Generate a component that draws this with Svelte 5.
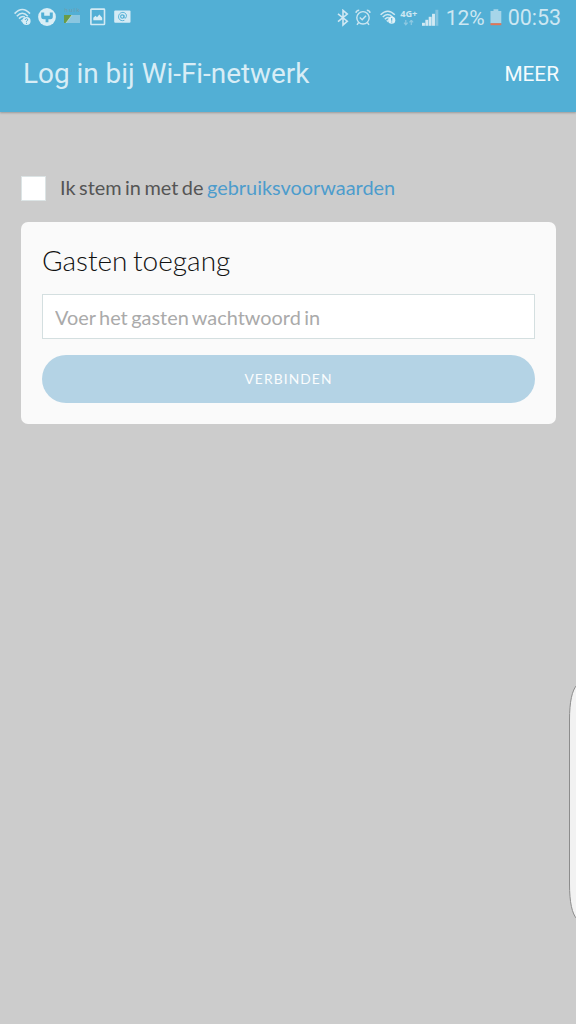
<script>
  let accepted = false;
  let password = "";
  let bars = [3, 6, 9, 12, 16];
</script>

<div class="screen">
  <header>
    <div class="status-bar">
      <div class="notifications">
        <svg width="18" height="18" viewBox="0 0 18 18">
          <g fill="none" stroke="#cfe8f2" stroke-width="1.6">
            <path d="M0.6 5.6Q8.3 -2.6 16 5.6" />
            <path d="M2.8 8.2Q8.3 2.4 13.8 8.2" />
            <path d="M5 10.6Q8 7.6 10.8 8.9" />
          </g>
          <path d="M6.7 12.7L8.6 11L9 14.8Z" fill="#cfe8f2" />
          <circle cx="12.5" cy="13" r="4.1" fill="#d9eef6" />
          <path d="M11.1 12Q11.3 10.6 12.6 10.7Q14.2 10.9 13.6 12.2L12.5 13.4V14.1M12.5 14.8V15.8" fill="none" stroke="#52afd5" />
        </svg>
        <svg width="18" height="18" viewBox="0 0 18 18">
          <circle cx="9" cy="9" r="8.9" fill="#d9eef6" />
          <path d="M3.2 4.6H6.2V7.8H11.8V4.6H14.8V9.2Q14.6 11 12.4 11.2H10.4V14.2H7.6V11.2H5.6Q3.4 11 3.2 9.2Z" fill="#52afd5" />
        </svg>
        <svg class="thumb" width="18" height="18" viewBox="0 0 18 18">
          <text x="0.5" y="4" textLength="15">hulk</text>
          <path d="M0 7H16V15H0Z" fill="#8ac6e0" />
          <path d="M0 7H8L2 15H0Z" fill="#699b48" />
          <path d="M8 7L2 15" stroke="#c5dfda" stroke-width="0.7" />
        </svg>
        <svg width="16" height="18" viewBox="0 0 16 18">
          <rect x="0.9" y="1.1" width="13.6" height="15.4" rx="0.6" fill="none" stroke="#d3eaf4" stroke-width="1.6" />
          <path d="M3.3 12.2V9.8L5.6 7.8L7 9.2L9.3 6.6L12.2 9.8V12.2Z" fill="#d9eef6" />
        </svg>
        <svg width="17" height="18" viewBox="0 0 17 18">
          <rect x="0.2" y="2.5" width="16.3" height="12.2" rx="1" fill="#d5ebf5" />
          <circle cx="8.3" cy="8.6" r="1.7" fill="none" stroke="#52afd5" stroke-width="1.1" />
          <path d="M10 7V9.2Q10.6 11 12 9.7C13.8 5.8 9.8 3.1 6.6 5C3.7 6.8 3.9 11.3 7 12.4Q8.6 13 10.4 12.3" fill="none" stroke="#52afd5" stroke-width="0.9" />
        </svg>
      </div>
      <div class="system">
        <svg width="12" height="18" viewBox="0 0 12 18">
          <path d="M1 4.8L10.3 12.2L6 16V1.4L10.3 5.1L1 12.6" fill="none" stroke="#d0e8f3" stroke-width="1.6" />
        </svg>
        <svg class="alarm" width="16" height="18" viewBox="0 0 16 18">
          <g fill="none" stroke="#cce6f1" stroke-width="1.4">
            <circle cx="8" cy="8.8" r="6.2" />
            <path d="M4.8 8.4L7.2 10.7L11 6.7" />
            <path d="M0.9 3.8Q1.4 1.4 4.2 1.2M11.8 1.2Q14.6 1.4 15.1 3.8M3.6 13.5L2 15.8M12.4 13.5L14 15.8" />
          </g>
        </svg>
        <svg class="wifi" width="17" height="18" viewBox="0 0 17 18">
          <g fill="none" stroke="#cfe8f2" stroke-width="1.5">
            <path d="M0.6 5.8Q7.7 -1.4 14.8 5.8" />
            <path d="M2.8 8.1Q7.7 2.8 12.6 8.1" />
            <path d="M4.8 10.2Q7 8 8.8 8.6" />
          </g>
          <path d="M6.2 11.8L7.7 10.6L8.2 13.6Z" fill="#cfe8f2" />
          <circle cx="11.7" cy="11.2" r="3.6" fill="#dff1f7" />
          <path d="M11.7 8.9V11.8M11.7 12.5V13.6" stroke="#52afd5" stroke-width="1.1" />
        </svg>
        <div class="mobile">
          <span>4G+</span>
          <svg width="12" height="6" viewBox="0 0 12 6">
            <path d="M2.8 0V4M1 2.6L2.8 4.8L4.6 2.6M8.3 5V1M6.5 2.4L8.3 0.2L10.1 2.4" fill="none" stroke="#8cc8e1" stroke-width="1.2" />
          </svg>
        </div>
        <svg class="signal" width="17" height="18" viewBox="0 0 17 18">
          {#each bars as height, i}
            <rect x={i * 3.35} y={16.8 - height} width="2.9" {height} fill={i < 4 ? "#d2e9f3" : "#82c3df"} />
          {/each}
        </svg>
        <span class="percent">12%</span>
        <svg class="battery" width="12" height="18" viewBox="0 0 12 18">
          <path d="M0.5 2H3.5V0.3H8.3V2H11.3V14.2H0.5Z" fill="#a6d5e9" />
          <path d="M0.5 14.2H11.3V16.2H0.5Z" fill="#e57555" />
        </svg>
        <span class="clock">00:53</span>
      </div>
    </div>
    <div class="title-bar">
      <h1>Log in bij Wi-Fi-netwerk</h1>
      <button class="more">MEER</button>
    </div>
  </header>

  <main>
    <div class="terms">
      <input id="terms" type="checkbox" bind:checked={accepted} />
      <label for="terms">Ik stem in met de <a href="#terms">gebruiksvoorwaarden</a></label>
    </div>
    <form class="card" on:submit|preventDefault>
      <h2>Gasten toegang</h2>
      <input class="password" type="password" placeholder="Voer het gasten wachtwoord in" bind:value={password} />
      <button class="connect" class:ready={accepted && password}>VERBINDEN</button>
    </form>
  </main>

  <!-- edge panel that slides in from the right -->
  <div class="edge-panel">
    <svg width="8" height="236" viewBox="0 0 8 236">
      <path d="M9 1C4 6 1.5 18 1.5 36V200C1.5 218 4 230 9 235Z" fill="#f2f2f2" stroke="#8c8c8c" />
    </svg>
  </div>
</div>

<style>
  :global(body) {
    margin: 0;
    background: #ccc;
  }

  .screen {
    position: relative;
    height: 1024px;
    background: #ccc;
    font-family: Lato, sans-serif;
    overflow: hidden;
  }

  header {
    height: 112px;
    background: #52afd5;
    box-shadow: 0 1px 2px rgba(0, 0, 0, 0.25);
    font-family: Roboto, sans-serif;
  }

  svg {
    display: block;
    flex-shrink: 0;
  }

  .status-bar {
    display: flex;
    justify-content: space-between;
    height: 36px;
    padding: 0 15px 0 14px;
  }

  .notifications,
  .system {
    display: flex;
    align-items: center;
    color: #cde7f2;
  }

  .system {
    height: 35px;
  }

  .notifications {
    gap: 8px;
    padding-bottom: 2px;
    height: 34px;
  }

  .notifications svg:nth-child(2) {
    margin-left: -2px;
  }

  .thumb text {
    font: 6px "Liberation Sans", sans-serif;
    fill: #6f9dab;
  }

  .alarm {
    margin-left: 6px;
  }

  .wifi {
    margin-left: 9px;
  }

  .mobile {
    display: flex;
    flex-direction: column;
    align-items: center;
    gap: 1px;
    width: 18px;
    margin-left: 3px;
    padding-bottom: 1px;
    font: bold 9.2px/10px "Open Sans", sans-serif;
  }

  .signal {
    margin-left: 4px;
  }

  .percent {
    width: 41px;
    margin-left: 7px;
    font-size: 21px;
  }

  .battery {
    margin-left: 3px;
  }

  .clock {
    margin-left: 6px;
    font-size: 21.4px;
  }

  .title-bar {
    display: flex;
    align-items: center;
    justify-content: space-between;
    height: 76px;
    padding: 0 17px 0 23px;
  }

  h1 {
    margin: 0;
    font-size: 27.9px;
    font-weight: 400;
    line-height: 34px;
    color: #d8edf6;
  }

  button {
    border: 0;
    padding: 0;
    font-family: inherit;
  }

  .more {
    background: none;
    font-size: 20.8px;
    color: #f5fbfd;
  }

  main {
    padding: 64px 20px 0 21px;
  }

  .terms {
    display: flex;
    align-items: center;
    gap: 14px;
    height: 25px;
    font-size: 19.9px;
    word-spacing: -1.6px;
    color: #555;
  }

  .terms label {
    padding-bottom: 3px;
  }

  .terms input {
    appearance: none;
    width: 25px;
    height: 25px;
    margin: 0;
    border: 1px solid #dce4e5;
    background: #fff;
  }

  .terms input:checked {
    background: #4d9fd0;
  }

  a {
    color: #4d9ccc;
    text-decoration: none;
  }

  .card {
    display: flex;
    flex-direction: column;
    box-sizing: border-box;
    height: 202px;
    margin-top: 21px;
    padding: 21px;
    border-radius: 7px;
    background: #fafafa;
  }

  h2 {
    margin: 0;
    font-size: 28px;
    font-weight: 300;
    line-height: 34px;
    word-spacing: -2px;
    color: #111;
  }

  .password {
    box-sizing: border-box;
    height: 45px;
    margin-top: 17px;
    padding: 0 12px;
    border: 1px solid #d4dfe0;
    border-radius: 0;
    background: #fff;
    font-family: inherit;
    font-size: 19.9px;
    word-spacing: -1.6px;
  }

  .password::placeholder {
    color: #aaa;
  }

  .connect {
    height: 48px;
    flex-shrink: 0;
    margin-top: 16px;
    padding-bottom: 2px;
    border-radius: 24px;
    background: #b4d3e5;
    font-size: 13.8px;
    letter-spacing: 1.1px;
    color: #fafcfd;
  }

  .connect.ready {
    background: #4d9fd0;
  }

  .edge-panel {
    position: absolute;
    top: 684px;
    right: 0;
  }
</style>
